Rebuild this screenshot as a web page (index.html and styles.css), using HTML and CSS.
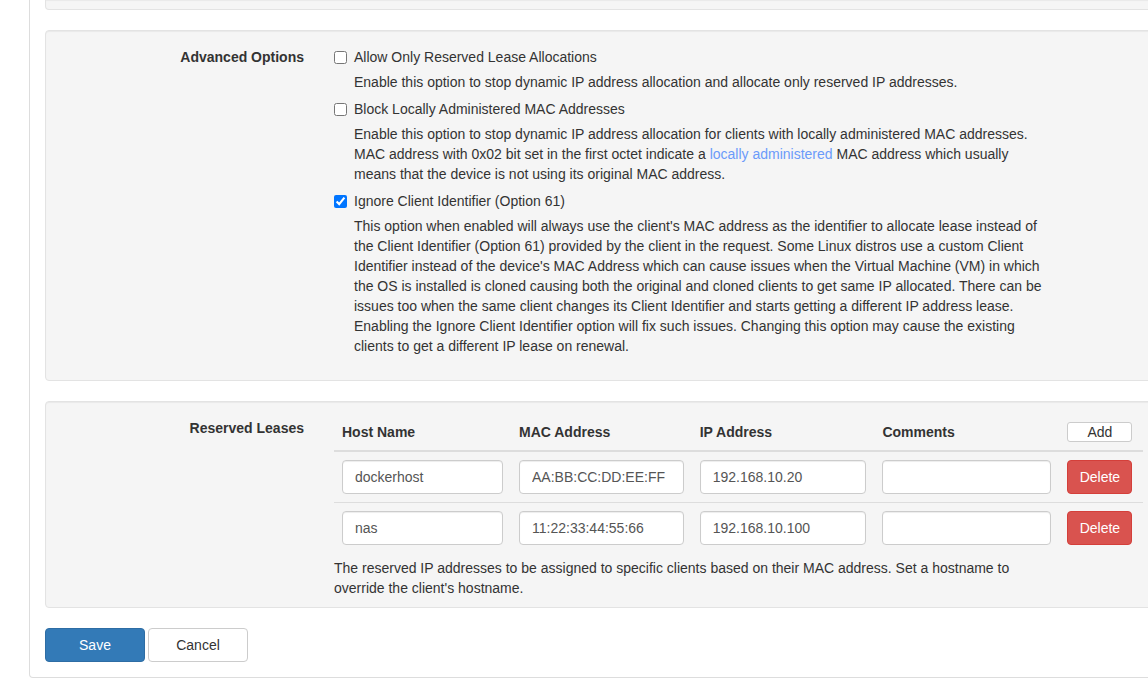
FILE: index.html
```html
<!DOCTYPE html>
<html>
<head>
<meta charset="utf-8">
<link rel="stylesheet" href="styles.css">
</head>
<body>
<div class="page">
  <div class="well well-top"></div>

  <div class="well">
    <div class="form-row">
      <div class="control-label">Advanced Options</div>
      <div class="controls">
        <label class="check"><input type="checkbox"> Allow Only Reserved Lease Allocations</label>
        <div class="desc">Enable this option to stop dynamic IP address allocation and allocate only reserved IP addresses.</div>
        <label class="check"><input type="checkbox"> Block Locally Administered MAC Addresses</label>
        <div class="desc">Enable this option to stop dynamic IP address allocation for clients with locally administered MAC addresses. MAC address with 0x02 bit set in the first octet indicate a <a href="#">locally administered</a> MAC address which usually means that the device is not using its original MAC address.</div>
        <label class="check"><input type="checkbox" checked> Ignore Client Identifier (Option 61)</label>
        <div class="desc last">This option when enabled will always use the client's MAC address as the identifier to allocate lease instead of the Client Identifier (Option 61) provided by the client in the request. Some Linux distros use a custom Client Identifier instead of the device's MAC Address which can cause issues when the Virtual Machine (VM) in which the OS is installed is cloned causing both the original and cloned clients to get same IP allocated. There can be issues too when the same client changes its Client Identifier and starts getting a different IP address lease. Enabling the Ignore Client Identifier option will fix such issues. Changing this option may cause the existing clients to get a different IP lease on renewal.</div>
      </div>
    </div>
  </div>

  <div class="well">
    <div class="form-row tight">
      <div class="control-label">Reserved Leases</div>
      <div class="controls">
        <table class="leases">
          <colgroup>
            <col class="c1"><col class="c2"><col class="c3"><col class="c4"><col class="c5">
          </colgroup>
          <thead>
            <tr>
              <th>Host Name</th>
              <th>MAC Address</th>
              <th>IP Address</th>
              <th>Comments</th>
              <th><button class="btn btn-add">Add</button></th>
            </tr>
          </thead>
          <tbody>
            <tr>
              <td><input class="field" type="text" value="dockerhost"></td>
              <td><input class="field" type="text" value="AA:BB:CC:DD:EE:FF"></td>
              <td><input class="field" type="text" value="192.168.10.20"></td>
              <td><input class="field" type="text" value=""></td>
              <td><button class="btn btn-danger">Delete</button></td>
            </tr>
            <tr>
              <td><input class="field" type="text" value="nas"></td>
              <td><input class="field" type="text" value="11:22:33:44:55:66"></td>
              <td><input class="field" type="text" value="192.168.10.100"></td>
              <td><input class="field" type="text" value=""></td>
              <td><button class="btn btn-danger">Delete</button></td>
            </tr>
          </tbody>
        </table>
        <div class="help">The reserved IP addresses to be assigned to specific clients based on their MAC address. Set a hostname to override the client's hostname.</div>
      </div>
    </div>
  </div>

  <div class="actions">
    <button class="btn btn-primary btn-lg">Save</button>
    <button class="btn btn-default btn-lg">Cancel</button>
  </div>
</div>
</body>
</html>
```

FILE: styles.css
```css
html, body {
  margin: 0;
  padding: 0;
  background: #fff;
  overflow: hidden;
}
body {
  font-family: "Liberation Sans", Arial, Helvetica, sans-serif;
  font-size: 14px;
  line-height: 20px;
  color: #333;
}
.page {
  margin-left: 29px;
  width: 1250px;
  border: 1px solid #ddd;
  border-top: none;
  border-radius: 0 0 4px 4px;
  padding: 0 15px 15px 15px;
}
.well {
  background: #f5f5f5;
  border: 1px solid #e3e3e3;
  border-radius: 4px;
  box-shadow: inset 0 1px 1px rgba(0,0,0,0.05);
  padding: 9px 0;
  margin-bottom: 20px;
}
.well-top {
  height: 9px;
  padding: 0;
  border-top: none;
  border-radius: 0 0 4px 4px;
}
.form-row {
  display: grid;
  grid-template-columns: 273px 1fr;
  padding-bottom: 15px;
}
.form-row.tight {
  padding-bottom: 0;
}
.control-label {
  font-weight: bold;
  text-align: right;
  padding-right: 15px;
  padding-top: 7px;
}
.controls {
  padding-left: 15px;
  padding-top: 7px;
}
.check {
  display: flex;
  align-items: center;
  height: 20px;
}
.check input {
  width: 13px;
  height: 13px;
  margin: 0 7px 0 0;
}
.desc {
  width: 692px;
  margin: 5px 0 7px 20px;
}
.desc.last {
  margin-bottom: 0;
}
.desc a {
  color: #6b9bfa;
  text-decoration: none;
}
.leases {
  border-collapse: collapse;
  table-layout: fixed;
  width: 809px;
  margin-top: -4px;
}
.c1 { width: 177px; }
.c2 { width: 180.7px; }
.c3 { width: 182.7px; }
.c4 { width: 185px; }
.c5 { width: 83.6px; }
.leases th {
  text-align: left;
  font-weight: bold;
  padding: 8px;
  border-bottom: 2px solid #ddd;
  vertical-align: bottom;
  line-height: 20px;
}
.leases td {
  padding: 8px;
  vertical-align: top;
}
.leases tbody tr + tr td {
  border-top: 1px solid #ddd;
}
.field {
  box-sizing: border-box;
  width: 100%;
  height: 34px;
  padding: 6px 12px;
  font-family: inherit;
  font-size: 14px;
  color: #555;
  background: #fff;
  border: 1px solid #ccc;
  border-radius: 4px;
  box-shadow: inset 0 1px 1px rgba(0,0,0,0.075);
  display: block;
}
.help {
  max-width: 711px;
  margin-top: 5px;
}
.btn {
  font-family: inherit;
  font-size: 14px;
  line-height: 20px;
  border: 1px solid transparent;
  border-radius: 4px;
  cursor: pointer;
  box-sizing: border-box;
  display: inline-block;
  text-align: center;
}
.btn-add {
  width: 65px;
  height: 20px;
  padding: 0;
  line-height: 18px;
  background: #fff;
  border-color: #ccc;
  color: #333;
  border-radius: 3px;
  display: block;
}
.btn-danger {
  width: 65px;
  height: 34px;
  padding: 6px 0;
  background: #d9534f;
  border-color: #d43f3a;
  color: #fff;
  display: block;
}
.actions {
  display: flex;
  gap: 3px;
}
.btn-lg {
  width: 100px;
  height: 34px;
  padding: 6px 0;
}
.btn-primary {
  background: #337ab7;
  border-color: #2e6da4;
  color: #fff;
}
.btn-default {
  background: #fff;
  border-color: #ccc;
  color: #333;
}
```
